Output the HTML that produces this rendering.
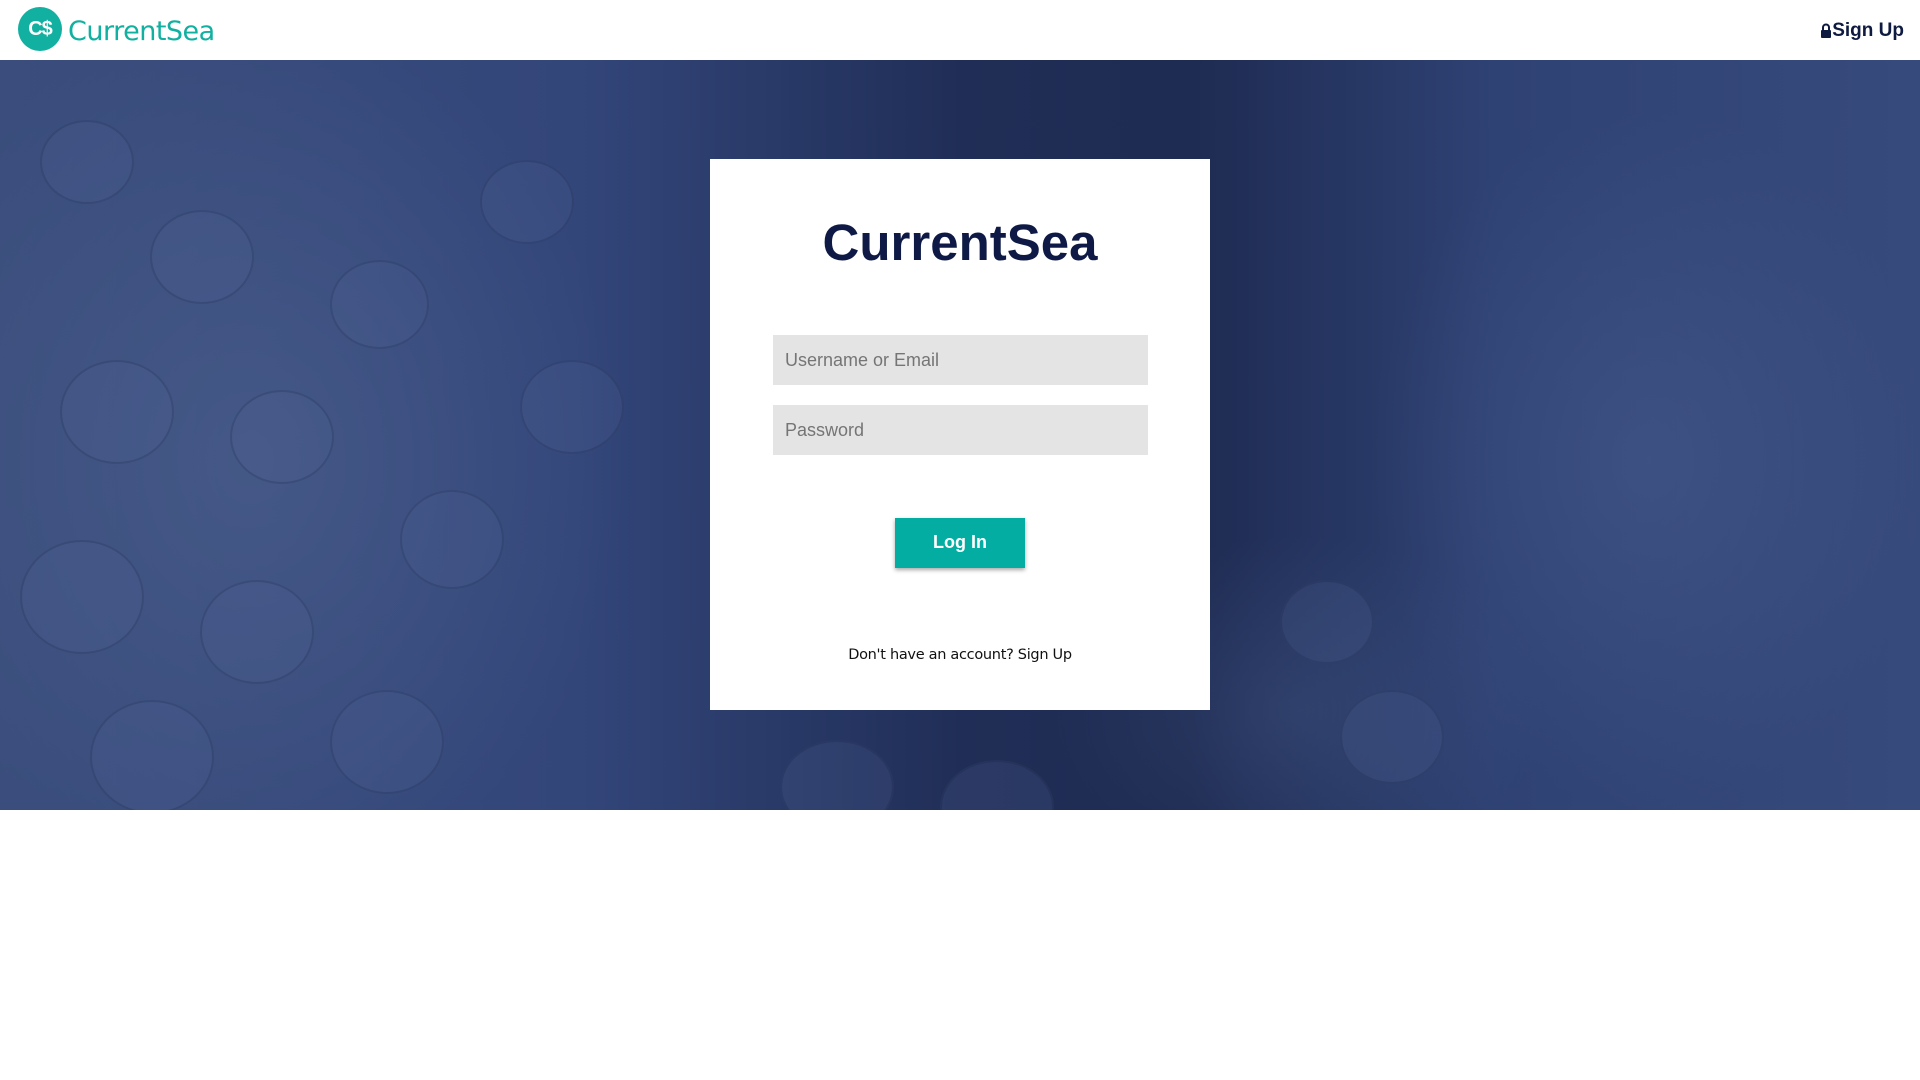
<!DOCTYPE html>
<html><head><meta charset="utf-8"><style>
html,body{margin:0;padding:0;width:1920px;height:1080px;background:#fff;overflow:hidden;font-family:"Liberation Sans",Arial,sans-serif}
.hdr{position:absolute;left:0;top:0;width:1920px;height:60px;background:#fff}
.logo{position:absolute;left:18px;top:7px;width:44px;height:44px;border-radius:50%;background:#12b0a0;color:#fff;font-weight:bold;font-size:20px;line-height:44px;text-align:center;letter-spacing:-1px}
.brand{position:absolute;left:68px;top:16px;font-size:27px;color:#12b0a0;font-family:"DejaVu Sans","Liberation Sans",sans-serif;letter-spacing:-0.5px}
.su{position:absolute;right:16px;top:20px;font-size:19px;font-weight:bold;color:#0e1a40}
.hero{position:absolute;left:0;top:60px;width:1920px;height:750px;overflow:hidden;
background:
radial-gradient(ellipse 400px 500px at 1650px 400px,rgba(75,95,145,.45),transparent 70%),
radial-gradient(ellipse 500px 600px at 250px 400px,rgba(80,100,145,.55),transparent 75%),
radial-gradient(ellipse 350px 250px at 1300px 650px,rgba(70,90,135,.35),transparent 70%),
linear-gradient(90deg,#3a4d7c 0%,#33467a 30%,#202e57 50%,#1e2b52 62%,#2f4274 78%,#374a7c 100%)}
.c{position:absolute;border-radius:50%;background:rgba(80,100,150,.22);border:2px solid rgba(20,30,65,.22)}
.card{position:absolute;left:710px;top:159px;width:500px;height:551px;background:#fff}
.t{position:absolute;left:0;width:500px;top:54px;text-align:center;font-size:51px;font-weight:bold;color:#0e1a45}
.in{position:absolute;left:63px;width:375px;height:50px;background:#e4e4e4;color:#757575;font-size:18px;line-height:50px;box-sizing:border-box;padding-left:12px}
.btn{position:absolute;left:185px;top:359px;width:130px;height:50px;background:#04ada2;color:#fff;font-weight:bold;font-size:18px;text-align:center;line-height:48px;box-shadow:0 2px 4px rgba(0,0,0,.35)}
.ft{position:absolute;left:0;width:500px;top:488px;text-align:center;font-size:14.5px;color:#111;font-family:"DejaVu Sans","Liberation Sans",sans-serif;letter-spacing:-.3px}
</style></head><body>
<div class="hdr">
<div class="logo">C$</div>
<div class="brand">CurrentSea</div>
<div class="su"><svg width="12" height="15" viewBox="0 0 12 15" style="vertical-align:-2px"><path d="M3 7V4.5a3 3 0 0 1 6 0V7" fill="none" stroke="#0e1a40" stroke-width="2"/><rect x="1" y="7" width="10" height="8" rx="1" fill="#0e1a40"/></svg>Sign Up</div>
</div>
<div class="hero">
<div class="c" style="left:40px;top:60px;width:90px;height:80px"></div>
<div class="c" style="left:150px;top:150px;width:100px;height:90px"></div>
<div class="c" style="left:60px;top:300px;width:110px;height:100px"></div>
<div class="c" style="left:230px;top:330px;width:100px;height:90px"></div>
<div class="c" style="left:330px;top:200px;width:95px;height:85px"></div>
<div class="c" style="left:20px;top:480px;width:120px;height:110px"></div>
<div class="c" style="left:200px;top:520px;width:110px;height:100px"></div>
<div class="c" style="left:400px;top:430px;width:100px;height:95px"></div>
<div class="c" style="left:90px;top:640px;width:120px;height:110px"></div>
<div class="c" style="left:330px;top:630px;width:110px;height:100px"></div>
<div class="c" style="left:480px;top:100px;width:90px;height:80px"></div>
<div class="c" style="left:520px;top:300px;width:100px;height:90px"></div>
<div class="c" style="left:780px;top:680px;width:110px;height:90px"></div>
<div class="c" style="left:940px;top:700px;width:110px;height:90px"></div>
<div class="c" style="left:1280px;top:520px;width:90px;height:80px"></div>
<div class="c" style="left:1340px;top:630px;width:100px;height:90px"></div>
</div>
<div class="card">
<div class="t">CurrentSea</div>
<div class="in" style="top:176px">Username or Email</div>
<div class="in" style="top:246px">Password</div>
<div class="btn">Log In</div>
<div class="ft">Don't have an account? Sign Up</div>
</div>
</body></html>
